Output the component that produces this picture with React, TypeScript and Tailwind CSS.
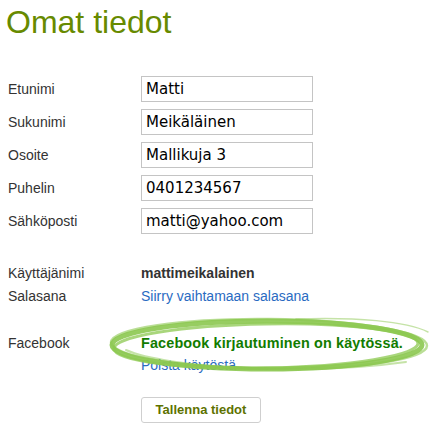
import React from "react";

const rows: [string, string][] = [
  ["Etunimi", "Matti"],
  ["Sukunimi", "Meikäläinen"],
  ["Osoite", "Mallikuja 3"],
  ["Puhelin", "0401234567"],
  ["Sähköposti", "matti@yahoo.com"],
];

export default function App() {
  return (
    <div className="relative w-[435px] h-[438px] bg-white overflow-hidden pl-[8px] font-['Liberation_Sans',Arial,sans-serif] text-[#333]">
      <h1 className="text-[32px] leading-[38px] pt-[3px] -ml-[2px] text-[#678a00] font-normal">Omat tiedot</h1>
      <div className="mt-[35px] flex flex-col gap-[7px]">
        {rows.map(([label, value]) => (
          <div key={label} className="flex items-baseline">
            <div className="w-[133px] text-[14px]">{label}</div>
            <div className="w-[172px] h-[26px] border border-[#c4c4c4] px-[4px] text-[15px] leading-[24px] text-black font-['DejaVu_Sans',Verdana,sans-serif]">
              {value}
            </div>
          </div>
        ))}
      </div>
      <div className="mt-[28px] text-[14px] leading-[23px]">
        <div className="flex">
          <div className="w-[133px]">Käyttäjänimi</div>
          <div className="font-bold">mattimeikalainen</div>
        </div>
        <div className="flex">
          <div className="w-[133px]">Salasana</div>
          <div className="text-[#2a6bc2]">Siirry vaihtamaan salasana</div>
        </div>
      </div>
      <div className="mt-[24px] text-[14px] leading-[22px]">
        <div className="flex items-baseline">
          <div className="w-[133px]">Facebook</div>
          <div className="font-bold text-[14.4px] tracking-[0.15px] text-[#127c00]">Facebook kirjautuminen on käytössä.</div>
        </div>
        <div className="flex">
          <div className="w-[133px]"></div>
          <div className="text-[#2a6bc2]">Poista käytöstä</div>
        </div>
      </div>
      <div className="mt-[21px] ml-[133px]">
        <button className="w-[120px] h-[26px] rounded-[3px] border border-[#cfcfcf] bg-white text-[13px] font-bold text-[#5d7200]">
          Tallenna tiedot
        </button>
      </div>
      <svg className="absolute left-[106px] top-[310px]" width="326" height="70" viewBox="0 0 326 70">
        <g fill="none" stroke="#8cc850" strokeLinecap="round">
          <ellipse cx="161" cy="35" rx="155" ry="24" strokeWidth="5" opacity="0.9" />
          <ellipse cx="160" cy="36" rx="152" ry="22" strokeWidth="3" opacity="0.75" transform="rotate(-1 160 36)" />
          <ellipse cx="163" cy="34" rx="158" ry="25" strokeWidth="2.5" opacity="0.6" transform="rotate(0.6 163 34)" />
          <path d="M190 9 C 250 7, 300 11, 322 22" strokeWidth="1.5" opacity="0.5" />
          <path d="M20 40 C 60 58, 200 66, 300 52" strokeWidth="2" opacity="0.5" />
        </g>
      </svg>
    </div>
  );
}
